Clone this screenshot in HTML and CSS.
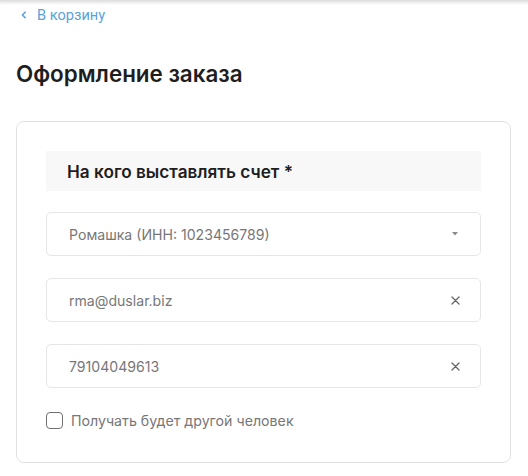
FILE: index.html
```html
<!DOCTYPE html>
<html lang="ru">
<head>
<meta charset="utf-8">
<link rel="stylesheet" href="styles.css">
</head>
<body>
<div class="shade"></div>
<main class="page">
  <a class="back" href="#">
    <svg class="chev" width="6" height="8" viewBox="0 0 6 8"><polyline points="4.2,1.2 1.4,4 4.2,6.8" fill="none" stroke="#5aa2dc" stroke-width="1.6" stroke-linecap="round" stroke-linejoin="round"/></svg>
    <span>В корзину</span>
  </a>
  <h1 class="title">Оформление заказа</h1>
  <section class="card">
    <div class="card-head">На кого выставлять счет *</div>
    <div class="field">
      <span class="value">Ромашка (ИНН: 1023456789)</span>
      <svg class="caret" width="6" height="4" viewBox="0 0 6 4"><polygon points="0,0 6,0 3,3.6" fill="#8a8a8a"/></svg>
    </div>
    <div class="field">
      <span class="value">rma@duslar.biz</span>
      <svg class="clear" width="9" height="9" viewBox="0 0 9 9"><path d="M1 1 L8 8 M8 1 L1 8" stroke="#666" stroke-width="1.3" stroke-linecap="round"/></svg>
    </div>
    <div class="field">
      <span class="value">79104049613</span>
      <svg class="clear" width="9" height="9" viewBox="0 0 9 9"><path d="M1 1 L8 8 M8 1 L1 8" stroke="#666" stroke-width="1.3" stroke-linecap="round"/></svg>
    </div>
    <label class="check">
      <span class="box"></span>
      <span class="check-text">Получать будет другой человек</span>
    </label>
  </section>
</main>
</body>
</html>
```

FILE: styles.css
```css
html, body {
  margin: 0;
  padding: 0;
  background: #ffffff;
}
body {
  font-family: Inter, "Noto Sans", sans-serif;
  color: #1e1e1e;
}
.shade {
  height: 5px;
  background: linear-gradient(#dcdcdc, rgba(255,255,255,0));
}
.page {
  display: flex;
  flex-direction: column;
  padding: 0 17px 0 16px;
}
.back {
  display: flex;
  align-items: center;
  height: 20px;
  padding-left: 5px;
  font-family: Roboto, "Liberation Sans", sans-serif;
  font-size: 14.6px;
  color: #5aa2dc;
  text-decoration: none;
}
.chev {
  margin-right: 10px;
}
.title {
  margin: 35px 0 0 0;
  font-size: 22.4px;
  line-height: 28px;
  font-weight: 600;
  color: #1e1e1e;
}
.card {
  margin-top: 33px;
  border: 1px solid #e2e2e2;
  border-radius: 8px;
  padding: 29px 29px 33px 29px;
  display: flex;
  flex-direction: column;
}
.card-head {
  height: 40px;
  background: #f8f8f8;
  display: flex;
  align-items: center;
  padding-left: 21px;
  font-size: 17.2px;
  font-weight: 600;
  color: #1e1e1e;
}
.field {
  margin-top: 21px;
  height: 44px;
  box-sizing: border-box;
  border: 1px solid #e6e6e6;
  border-radius: 5px;
  display: flex;
  align-items: center;
  justify-content: space-between;
  padding: 0 20px 0 22px;
  font-size: 14.1px;
  color: #777777;
}
.field + .field {
  margin-top: 22px;
}
.caret {
  margin-right: 2px;
}
.check {
  margin-top: 24px;
  display: flex;
  align-items: center;
  gap: 8px;
  font-size: 14.2px;
  color: #777777;
}
.box {
  width: 17px;
  height: 17px;
  box-sizing: border-box;
  border: 1.5px solid #707070;
  border-radius: 4px;
}
```
